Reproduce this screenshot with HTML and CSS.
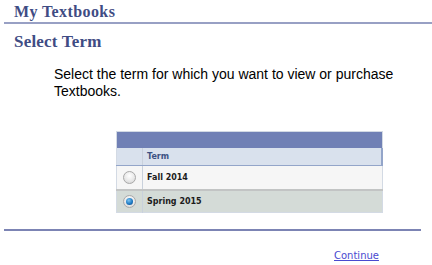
FILE: index.html
```html
<!DOCTYPE html>
<html>
<head>
<meta charset="utf-8">
<link rel="stylesheet" href="styles.css">
</head>
<body>
<div class="page-title">My Textbooks</div>
<div class="section-title">Select Term</div>
<p class="intro">Select the term for which you want to view or purchase Textbooks.</p>
<table class="term-grid">
  <tr class="grid-bar"><td colspan="2"></td></tr>
  <tr class="grid-head"><th class="sel-col"></th><th class="term-col">Term</th></tr>
  <tr class="row-odd"><td class="sel-col"><span class="radio"></span></td><td class="term-col">Fall 2014</td></tr>
  <tr class="row-even"><td class="sel-col"><span class="radio checked"></span></td><td class="term-col">Spring 2015</td></tr>
</table>
<div class="bottom-rule"></div>
<div class="actions"><a href="#" class="continue">Continue</a></div>
</body>
</html>
```
FILE: styles.css
```css
html, body {
  margin: 0;
  padding: 0;
  background: #ffffff;
}
body {
  width: 432px;
  height: 265px;
  overflow: hidden;
}
.page-title {
  margin-left: 4px;
  padding: 3px 0 2px 10px;
  border-bottom: 2px solid #98a0c4;
  font-family: "Liberation Serif", serif;
  font-weight: bold;
  font-size: 16px;
  line-height: 17px;
  letter-spacing: 0.4px;
  color: #3f4c84;
}
.section-title {
  margin-top: 8px;
  padding-left: 14px;
  font-family: "Liberation Serif", serif;
  font-weight: bold;
  font-size: 17px;
  line-height: 20px;
  letter-spacing: 0.2px;
  color: #3f4c84;
}
.intro {
  margin: 14px 0 0 54px;
  width: 345px;
  font-family: "Liberation Sans", Arial, sans-serif;
  font-size: 14px;
  line-height: 17px;
  color: #000000;
}
.term-grid {
  margin: 31px 0 0 116px;
  width: 267px;
  border-collapse: collapse;
  border: 1px solid #d3dae4;
  font-family: "DejaVu Sans", Verdana, sans-serif;
  font-size: 8px;
  font-weight: bold;
}
.term-grid td, .term-grid th {
  padding: 0;
}
.grid-bar td {
  height: 16px;
  background: #7080b5;
}
.grid-head th {
  height: 17px;
  background: #d9e1ed;
  border-bottom: 1px solid #93a5c9;
  color: #3d5183;
  text-align: left;
}
.grid-head .term-col {
  border-right: 2px solid #93a5c9;
}
.sel-col {
  width: 25px;
  border-right: 1px solid #c9d1dc;
  text-align: center;
}
.term-col {
  padding-left: 4px !important;
  text-align: left;
  color: #1c1c1c;
}
.row-odd td {
  height: 23px;
  background: #f6f6f6;
  border-bottom: 2px solid #c2c4c4;
}
.row-even td {
  height: 21px;
  background: #d4dbd7;
}
.radio {
  display: inline-block;
  width: 11px;
  height: 11px;
  border-radius: 50%;
  border: 1px solid #a9a9a9;
  background: radial-gradient(circle at 50% 35%, #ffffff 0%, #e6e6e6 60%, #cfcfcf 100%);
  vertical-align: middle;
  position: relative;
}
.radio.checked::after {
  content: "";
  position: absolute;
  left: 2px;
  top: 2px;
  width: 7px;
  height: 7px;
  border-radius: 50%;
  background: radial-gradient(circle at 40% 35%, #7fc4f0 0%, #1e7bc4 55%, #0b3f78 100%);
}
.bottom-rule {
  margin: 16px 0 0 4px;
  width: 417px;
  height: 2px;
  background: #7c84b4;
}
.actions {
  margin-top: 19px;
  padding-left: 334px;
  font-family: "DejaVu Sans", Verdana, sans-serif;
  font-size: 10px;
  line-height: 12px;
}
.continue {
  color: #4a4ad0;
  text-decoration: underline;
}
```
